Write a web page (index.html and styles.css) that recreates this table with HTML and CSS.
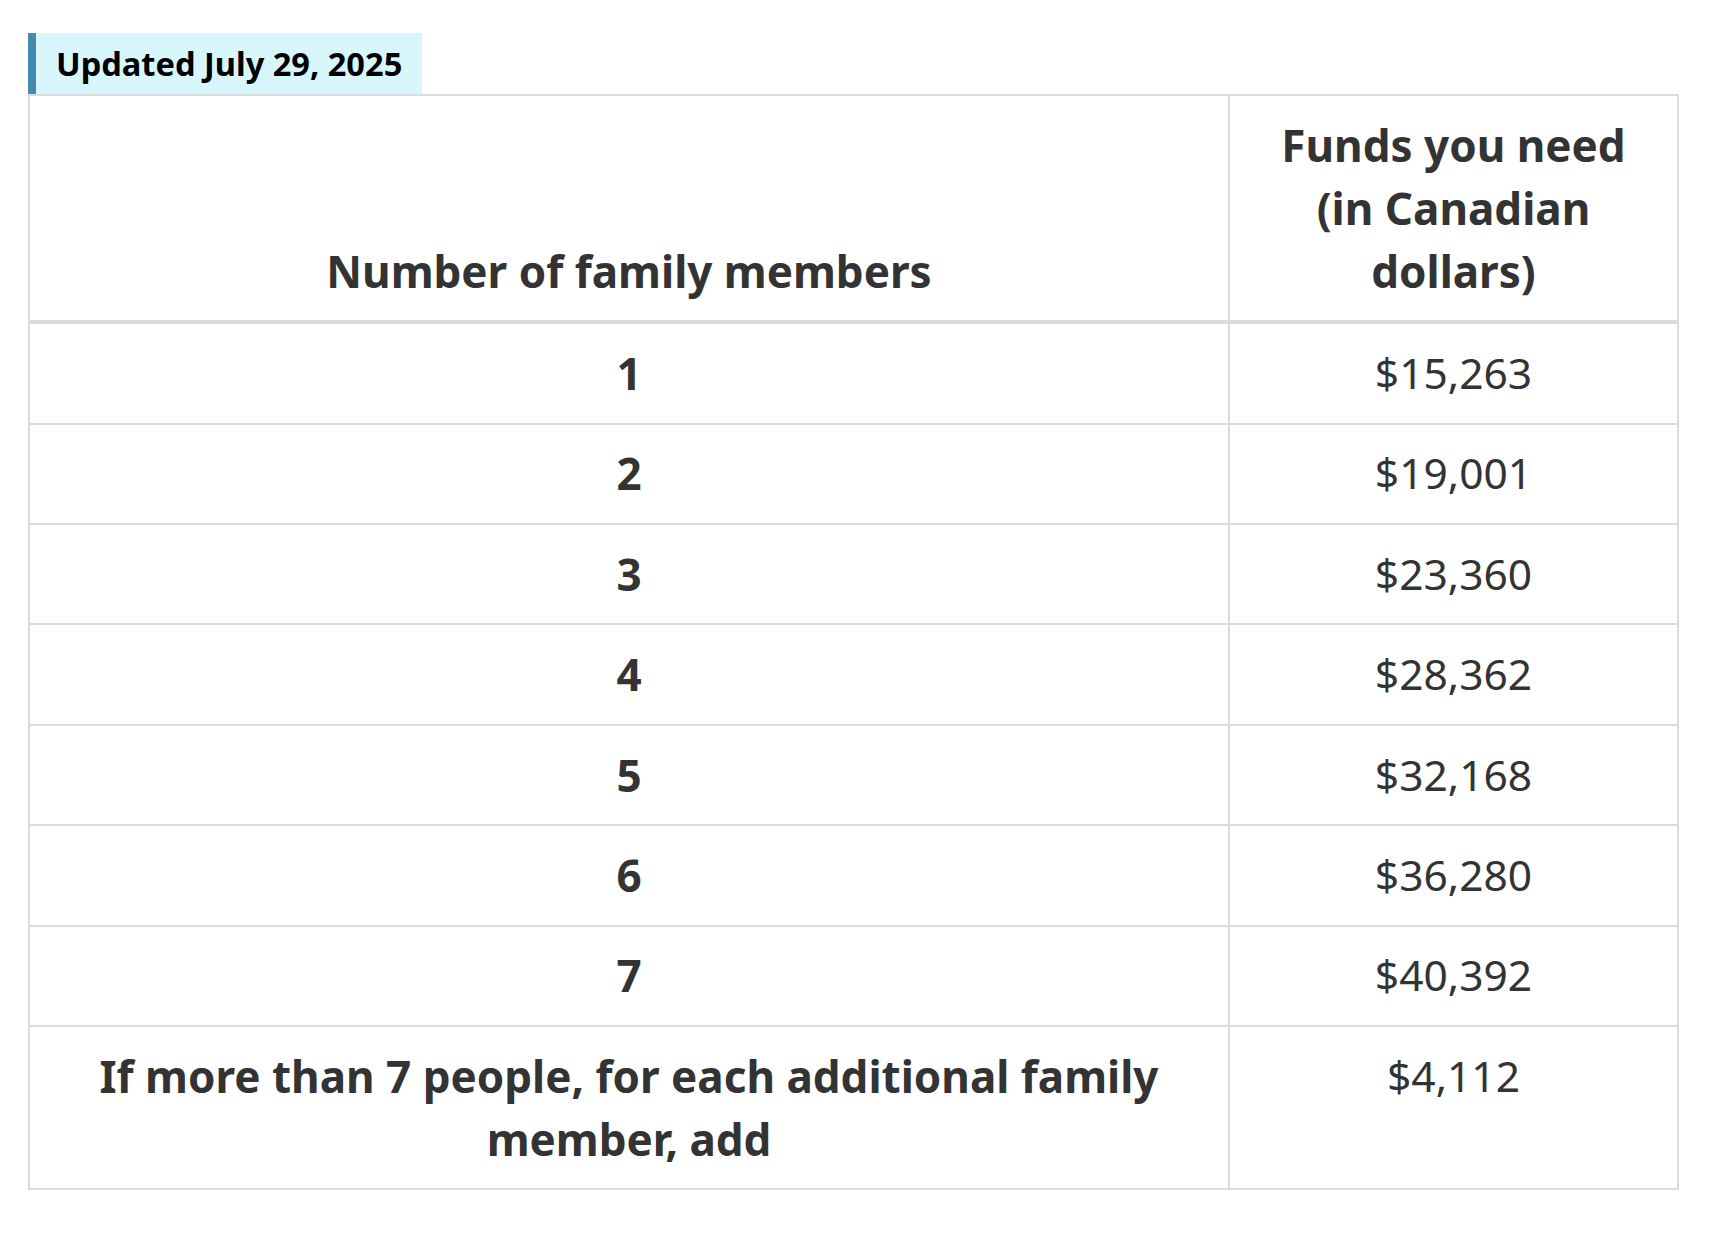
FILE: index.html
```html
<!DOCTYPE html>
<html lang="en">
<head>
<meta charset="utf-8">
<title>Proof of funds</title>
<link rel="stylesheet" href="styles.css">
</head>
<body>
<main class="page">
  <div class="updated"><span class="updated-label">Updated July 29, 2025</span></div>
  <table class="funds">
    <colgroup>
      <col class="col-members">
      <col class="col-funds">
    </colgroup>
    <thead>
      <tr>
        <th>Number of family members</th>
        <th>Funds you need (in Canadian dollars)</th>
      </tr>
    </thead>
    <tbody>
      <tr><th>1</th><td>$15,263</td></tr>
      <tr><th>2</th><td>$19,001</td></tr>
      <tr><th>3</th><td>$23,360</td></tr>
      <tr><th>4</th><td>$28,362</td></tr>
      <tr><th>5</th><td>$32,168</td></tr>
      <tr><th>6</th><td>$36,280</td></tr>
      <tr><th>7</th><td>$40,392</td></tr>
      <tr><th>If more than 7 people, for each additional family member, add</th><td>$4,112</td></tr>
    </tbody>
  </table>
</main>
</body>
</html>
```

FILE: styles.css
```css
* { box-sizing: border-box; }

html, body {
  margin: 0;
  padding: 0;
  background: #ffffff;
}

body {
  font-family: "Noto Sans", "Liberation Sans", sans-serif;
  color: #333333;
}

.page {
  padding: 33px 0 0 28px;
}

.updated {
  display: flex;
}

.updated-label {
  display: block;
  background: #d7f7fd;
  border-left: 8px solid #3f8bb3;
  color: #000000;
  font-weight: 700;
  font-size: 32.6px;
  line-height: 45px;
  padding: 8px 20px 8px 20px;
}

.funds {
  width: 1649px;
  border-collapse: collapse;
  table-layout: fixed;
  font-size: 44px;
  line-height: 62.9px;
}

.col-members { width: 1200px; }
.col-funds { width: 449px; }

.funds th,
.funds td {
  border: 2px solid #dbdbdb;
  padding: 17.75px;
  text-align: center;
  vertical-align: top;
}

.funds th {
  font-weight: 700;
}

.funds td {
  font-weight: 400;
  font-size: 42.5px;
}

.funds thead th {
  vertical-align: bottom;
  border-bottom: 4px solid #dbdbdb;
}
```
